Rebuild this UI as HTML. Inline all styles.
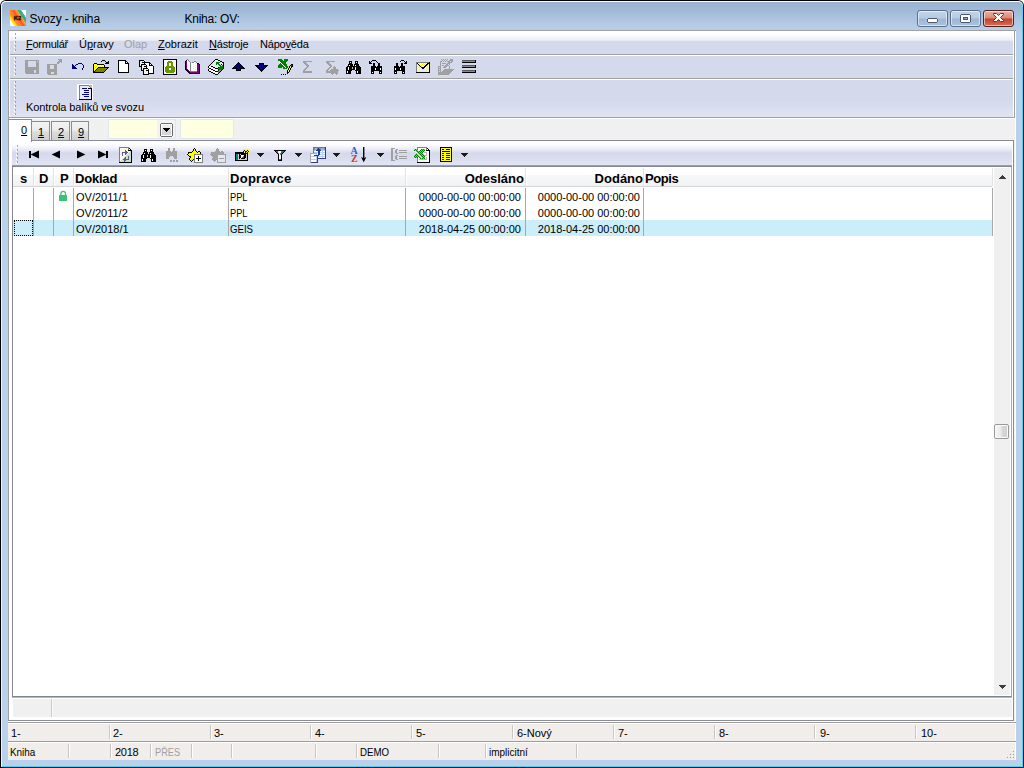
<!DOCTYPE html>
<html>
<head>
<meta charset="utf-8">
<title>Svozy - kniha</title>
<style>
html,body{margin:0;padding:0;width:1024px;height:768px;overflow:hidden;background:#fff;}
#win{left:0;top:0;width:1024px;height:768px;background:#000;border-radius:6px 6px 0 0;}
body{font-family:"Liberation Sans",sans-serif;font-size:11px;color:#000;position:relative;}
.a{position:absolute;}
.t{position:absolute;white-space:nowrap;line-height:13px;font-size:11px;}
u{text-decoration:underline;text-underline-offset:1px;text-decoration-thickness:1px;}
/* window frame */
#frame{left:1px;top:1px;width:1022px;height:766px;border-radius:5px 5px 0 0;background:#b9d1ea;overflow:hidden;}
#titlegrad{left:0;top:0;width:1022px;height:40px;background:linear-gradient(#98b4d2 0px,#a0bad7 10px,#b2c9e3 22px,#b9d1ea 32px);}
#hl{left:0;top:0;width:1022px;height:766px;border-radius:5px 5px 0 0;box-shadow:inset 0 1px 0 #ffffff, inset 1px 0 0 #eef4fa, inset -1px -1px 0 #47d5f5;}
#title{left:29.5px;top:12px;font-size:12px;line-height:14px;letter-spacing:-0.12px;}
#title2{left:184.5px;top:12px;font-size:12px;line-height:14px;letter-spacing:-0.25px;}
.cb{top:10px;height:15px;border:1px solid #5c6f8a;border-radius:3px;box-shadow:inset 0 0 0 1px rgba(255,255,255,.55);}
#bmin,#bmax{background:linear-gradient(#c3d5ea 0%,#b5cae3 48%,#9cb7d6 52%,#a9c3df 100%);}
#bcls{background:linear-gradient(#e9b0a5 0%,#d98877 48%,#c4402a 52%,#d4705c 100%);border-color:#5a1f1b;}
/* client */
#client{left:8px;top:30px;width:1008px;height:730px;background:#f0f0f0;}
#dock{left:1px;top:1px;width:1006px;height:87px;background:#d5d9ec;}
.bar{left:1px;width:1004px;background:linear-gradient(#ffffff 0px,#ffffff 3px,#f6f7fc 6px,#ebedf7 9.4px,#d5d9ec 10px);}
.sepg{left:2px;width:1004px;height:1px;background:#a0a0a0;}
.sepw{left:2px;width:1004px;height:1px;background:#ffffff;}
.grip{left:5px;width:2px;background-image:linear-gradient(to bottom,transparent 0px,transparent 1px,#fff 1px,#fff 3px,transparent 3px),linear-gradient(to bottom,#9fa2b2 0px,#9fa2b2 2px,transparent 2px);background-size:1px 4px,1px 4px;background-position:0 0,1px 0;background-repeat:repeat-y;}
.m{top:7px;}
/* tabs */
.tab{top:91px;height:19px;border:1px solid #898c95;border-bottom:none;background:linear-gradient(#f3f3f3 0%,#ececec 45%,#dcdcdc 55%,#cfcfcf 100%);box-sizing:border-box;}
.tabt{top:96px;}
#tab0{left:0px;top:89px;width:24px;height:23px;background:#fff;border:1px solid #898c95;border-bottom:none;border-left-color:#a0a0a0;box-sizing:border-box;}
#page{left:0;top:110px;width:1006px;height:581px;background:#fff;border:1px solid #898c95;border-left-color:#a0a0a0;box-sizing:border-box;}
.yel{top:89px;height:20px;background:#ffffe1;border:1px solid #e2e6ee;border-radius:2px;box-sizing:border-box;}
/* inner toolbar */
#itb{left:4px;top:112px;width:1000px;height:23px;background:linear-gradient(#ffffff 0px,#fcfcfe 3px,#eceef7 7px,#d5d9ec 11px,#d8dcee 16px,#e2e5f3 23px);}
#itbl{left:4px;top:135px;width:1000px;height:1px;background:#9a9eb4;}
/* grid */
#grid{left:4px;top:136px;width:1000px;height:532px;background:#fff;border:1px solid #828790;border-right-color:#a4a8b2;border-bottom:1px solid #7f8591;box-sizing:border-box;height:531px;box-shadow:0 1px 0 #b4b8c2;}
#ghead{left:0px;top:0px;width:979px;height:19px;background:linear-gradient(#ffffff 0%,#ffffff 40%,#f7f8fa 45%,#f1f2f4 100%);border-bottom:1px solid #d5d5d5;}
.hs{top:1px;width:1px;height:18px;background:#e0e3e8;box-shadow:1px 0 0 #fff;}
.h{position:absolute;top:4px;font-weight:bold;font-size:13px;line-height:15px;white-space:nowrap;}
.vl{top:21px;width:1px;height:48px;background:#a8a8a8;}
.sq{transform-origin:0 0;}
.r{position:absolute;font-size:11px;line-height:13px;white-space:nowrap;}
#sel{left:0px;top:53px;width:980px;height:16px;background:#cbeefa;}
#focus{left:1px;top:53px;width:19px;height:16px;box-sizing:border-box;border:1px dotted #000;}
#sb{left:981px;top:1px;width:16px;height:527px;background:#f0f0f0;}
#thumb{left:0px;top:256px;width:15px;height:15px;box-sizing:border-box;border:1px solid #999a9c;border-radius:2px;background:linear-gradient(90deg,#f5f5f5 0%,#ebebeb 47%,#dadadc 53%,#cdcdd1 100%);box-shadow:inset 0 0 0 1px #fbfbfb;}
#gstat{left:5px;top:669px;width:999px;height:18px;background:#f0f0f0;}
/* bottom bars */
.bb{left:0;width:1007px;background:#f0edeb;}
.fs{top:1px;width:1px;height:14px;background:#c8c5c2;box-shadow:1px 0 0 #fff;}
</style>
</head>
<body>
<div id="win" class="a"></div>
<div id="frame" class="a">
 <div id="titlegrad" class="a"></div>
 <div id="hl" class="a"></div>
</div>
<svg class="a" style="left:10px;top:10px" width="16" height="16" viewBox="0 0 16 16"><defs><linearGradient id="ag" gradientUnits="userSpaceOnUse" x1="0" y1="16" x2="18.5" y2="3.5">
<stop offset="0" stop-color="#fff"/><stop offset="0.15" stop-color="#fff"/><stop offset="0.18" stop-color="#fff228"/><stop offset="0.245" stop-color="#ffd41e"/><stop offset="0.31" stop-color="#ff8c1c"/><stop offset="0.447" stop-color="#ff7a24"/><stop offset="0.51" stop-color="#ff4a2c"/><stop offset="0.573" stop-color="#ff8428"/><stop offset="0.636" stop-color="#f8a238"/><stop offset="0.672" stop-color="#a8a060"/><stop offset="0.70" stop-color="#3ea474"/><stop offset="0.762" stop-color="#36b49a"/><stop offset="0.80" stop-color="#3ab8a0"/><stop offset="0.82" stop-color="#fff"/><stop offset="1" stop-color="#fff"/></linearGradient></defs>
<rect width="16" height="16" fill="url(#ag)"/>
<text x="3.8" y="10" font-family="Liberation Sans" font-weight="bold" font-size="5.8" letter-spacing="0" fill="#111" stroke="#111" stroke-width="0.35">K2</text></svg>
<div id="title" class="t">Svozy - kniha</div>
<div id="title2" class="t">Kniha: OV:</div>
<div id="bmin" class="a cb" style="left:917px;width:29px;"></div>
<div id="bmax" class="a cb" style="left:950px;width:29px;"></div>
<div id="bcls" class="a cb" style="left:983px;width:29px;"></div>
<svg class="a" style="left:927px;top:18px" width="11" height="5" shape-rendering="crispEdges"><path fill="#50576a" d="M1 0h9v1h-9zM0 1h1v1h-1zM10 1h1v1h-1zM0 2h1v1h-1zM10 2h1v1h-1zM0 3h1v1h-1zM10 3h1v1h-1zM1 4h9v1h-9z"/><path fill="#ffffff" d="M1 1h9v1h-9zM1 2h9v1h-9zM1 3h9v1h-9z"/></svg>
<svg class="a" style="left:960px;top:14px" width="11" height="9" shape-rendering="crispEdges"><path fill="#50576a" d="M1 0h9v1h-9zM0 1h1v1h-1zM10 1h1v1h-1zM0 2h1v1h-1zM10 2h1v1h-1zM0 3h1v1h-1zM3 3h5v1h-5zM10 3h1v1h-1zM0 4h1v1h-1zM3 4h1v1h-1zM10 4h1v1h-1zM0 5h1v1h-1zM3 5h5v1h-5zM10 5h1v1h-1zM0 6h1v1h-1zM10 6h1v1h-1zM0 7h1v1h-1zM10 7h1v1h-1zM1 8h9v1h-9z"/><path fill="#ffffff" d="M1 1h9v1h-9zM1 2h9v1h-9zM1 3h2v1h-2zM8 3h2v1h-2zM1 4h2v1h-2zM8 4h2v1h-2zM1 5h2v1h-2zM8 5h2v1h-2zM1 6h9v1h-9zM1 7h9v1h-9z"/><path fill="#8da4c4" d="M4 4h3v1h-3z"/><path fill="#50576a" d="M7 4h1v1h-1z"/></svg>
<svg class="a" style="left:993px;top:13px" width="11" height="9" viewBox="0 0 11 9"><path d="M0.5,0.5 h3 l2,2 l2,-2 h3 v1 l-3,3 l3,3 v1 h-3 l-2,-2 l-2,2 h-3 v-1 l3,-3 l-3,-3 z" fill="#fff" stroke="#4e3a40" stroke-width="1" stroke-linejoin="round"/></svg>

<div id="client" class="a">
 <!-- 3D client border -->
 <div class="a" style="left:0;top:0;width:1008px;height:1px;background:#a0a0a0;"></div>
 <div class="a" style="left:0;top:0;width:1px;height:692px;background:#a0a0a0;"></div>
 <div class="a" style="left:1007px;top:1px;width:1px;height:729px;background:#fff;"></div>

 <!-- toolbar dock : client y 1..87 (abs 31..117) -->
 <div id="dock" class="a">
  <div class="a bar" style="top:0;height:23px;"></div>
  <div class="a bar" style="top:24px;height:23px;background:#d5d9ec;"></div>
  <div class="a bar" style="top:48px;height:38px;background:linear-gradient(#d5d9ec 0,#d5d9ec 22px,#e1e4f2 38px);"></div>
  <div class="a" style="left:0;top:0;width:1px;height:87px;background:#fff;"></div>
  <div class="a" style="left:1px;top:23px;width:1004px;height:1px;background:#a0a0a0;"></div>
  <div class="a" style="left:1px;top:24px;width:1004px;height:1px;background:#fff;"></div>
  <div class="a" style="left:1px;top:47px;width:1004px;height:1px;background:#a0a0a0;"></div>
  <div class="a" style="left:1px;top:48px;width:1004px;height:1px;background:#fff;"></div>
  <div class="a" style="left:0;top:86px;width:1006px;height:1px;background:#a0a0a0;"></div>
  <div class="a" style="left:1004px;top:0;width:1px;height:86px;background:#fff;"></div>
  <div class="a" style="left:1005px;top:0;width:1px;height:87px;background:#a0a0a0;"></div>
  <div class="a grip" style="top:2px;height:20px;"></div>
  <div class="a grip" style="top:26px;height:20px;"></div>
  <div class="a grip" style="top:50px;height:34px;"></div>
  <svg class="a" style="left:15px;top:28px" width="16" height="16" shape-rendering="crispEdges"><path fill="#a0a0a0" d="M1 1h14v1h-14zM1 2h3v1h-3zM12 2h1v1h-1zM14 2h1v1h-1zM1 3h3v1h-3zM12 3h3v1h-3zM1 4h3v1h-3zM12 4h3v1h-3zM1 5h3v1h-3zM12 5h3v1h-3zM1 6h3v1h-3zM12 6h3v1h-3zM1 7h3v1h-3zM12 7h3v1h-3zM1 8h14v1h-14zM1 9h14v1h-14zM1 10h14v1h-14zM1 11h9v1h-9zM12 11h3v1h-3zM1 12h9v1h-9zM12 12h3v1h-3zM1 13h9v1h-9zM12 13h3v1h-3zM2 14h13v1h-13z"/></svg><svg class="a" style="left:38px;top:28px" width="16" height="16" shape-rendering="crispEdges"><path fill="#a0a0a0" d="M11 0h4v1h-4zM12 1h3v1h-3zM11 2h4v1h-4zM10 3h3v1h-3zM14 3h1v1h-1zM10 4h2v1h-2zM0 5h10v1h-10zM0 6h3v1h-3zM7 6h3v1h-3zM0 7h3v1h-3zM7 7h3v1h-3zM0 8h3v1h-3zM7 8h3v1h-3zM0 9h3v1h-3zM7 9h3v1h-3zM0 10h10v1h-10zM0 11h10v1h-10zM0 12h10v1h-10zM0 13h4v1h-4zM7 13h3v1h-3zM0 14h4v1h-4zM7 14h3v1h-3zM1 15h9v1h-9z"/></svg><svg class="a" style="left:61px;top:28px" width="16" height="16" shape-rendering="crispEdges"><path fill="#000080" d="M8 4h4v1h-4zM2 5h1v1h-1zM6 5h2v1h-2zM12 5h1v1h-1zM2 6h2v1h-2zM5 6h1v1h-1zM13 6h1v1h-1zM2 7h3v1h-3zM13 7h1v1h-1zM2 8h4v1h-4zM13 8h1v1h-1zM2 9h5v1h-5zM12 9h1v1h-1zM12 10h1v1h-1z"/></svg><svg class="a" style="left:84px;top:28px" width="16" height="16" shape-rendering="crispEdges"><path fill="#000000" d="M9 1h3v1h-3zM8 2h1v1h-1zM12 2h1v1h-1zM15 2h1v1h-1zM13 3h3v1h-3zM1 4h3v1h-3zM12 4h4v1h-4zM0 5h1v1h-1zM4 5h7v1h-7zM0 6h1v1h-1zM11 6h1v1h-1zM0 7h1v1h-1zM11 7h1v1h-1zM0 8h1v1h-1zM5 8h11v1h-11zM0 9h1v1h-1zM4 9h1v1h-1zM14 9h1v1h-1zM0 10h1v1h-1zM3 10h1v1h-1zM13 10h1v1h-1zM0 11h1v1h-1zM2 11h1v1h-1zM12 11h1v1h-1zM0 12h2v1h-2zM11 12h1v1h-1zM0 13h11v1h-11z"/><path fill="#ffff00" d="M1 5h1v1h-1zM3 5h1v1h-1zM2 6h1v1h-1zM4 6h1v1h-1zM6 6h1v1h-1zM8 6h1v1h-1zM10 6h1v1h-1zM1 7h1v1h-1zM3 7h1v1h-1zM5 7h1v1h-1zM7 7h1v1h-1zM9 7h1v1h-1zM2 8h1v1h-1zM4 8h1v1h-1zM1 9h1v1h-1zM3 9h1v1h-1zM2 10h1v1h-1zM1 11h1v1h-1z"/><path fill="#ffffff" d="M2 5h1v1h-1zM1 6h1v1h-1zM3 6h1v1h-1zM5 6h1v1h-1zM7 6h1v1h-1zM9 6h1v1h-1zM2 7h1v1h-1zM4 7h1v1h-1zM6 7h1v1h-1zM8 7h1v1h-1zM10 7h1v1h-1zM1 8h1v1h-1zM3 8h1v1h-1zM2 9h1v1h-1zM1 10h1v1h-1z"/><path fill="#808000" d="M5 9h9v1h-9zM4 10h9v1h-9zM3 11h9v1h-9zM2 12h9v1h-9z"/></svg><svg class="a" style="left:107px;top:28px" width="16" height="16" shape-rendering="crispEdges"><path fill="#000000" d="M2 1h8v1h-8zM2 2h1v1h-1zM9 2h2v1h-2zM2 3h1v1h-1zM9 3h1v1h-1zM11 3h1v1h-1zM2 4h1v1h-1zM9 4h4v1h-4zM2 5h1v1h-1zM12 5h1v1h-1zM2 6h1v1h-1zM12 6h1v1h-1zM2 7h1v1h-1zM12 7h1v1h-1zM2 8h1v1h-1zM12 8h1v1h-1zM2 9h1v1h-1zM12 9h1v1h-1zM2 10h1v1h-1zM12 10h1v1h-1zM2 11h1v1h-1zM12 11h1v1h-1zM2 12h1v1h-1zM12 12h1v1h-1zM2 13h11v1h-11z"/><path fill="#ffffff" d="M3 2h6v1h-6zM3 3h6v1h-6zM10 3h1v1h-1zM3 4h6v1h-6zM3 5h9v1h-9zM3 6h9v1h-9zM3 7h9v1h-9zM3 8h9v1h-9zM3 9h9v1h-9zM3 10h9v1h-9zM3 11h9v1h-9zM3 12h9v1h-9z"/></svg><svg class="a" style="left:130px;top:28px" width="16" height="16" shape-rendering="crispEdges"><path fill="#000000" d="M0 1h5v1h-5zM0 2h1v1h-1zM5 2h1v1h-1zM0 3h1v1h-1zM3 3h8v1h-8zM0 4h1v1h-1zM5 4h1v1h-1zM10 4h2v1h-2zM0 5h1v1h-1zM2 5h5v1h-5zM10 5h1v1h-1zM12 5h1v1h-1zM0 6h1v1h-1zM2 6h1v1h-1zM7 6h1v1h-1zM10 6h4v1h-4zM0 7h3v1h-3zM5 7h3v1h-3zM14 7h1v1h-1zM2 8h1v1h-1zM7 8h1v1h-1zM14 8h1v1h-1zM2 9h1v1h-1zM4 9h5v1h-5zM14 9h1v1h-1zM2 10h1v1h-1zM4 10h1v1h-1zM9 10h1v1h-1zM14 10h1v1h-1zM2 11h3v1h-3zM7 11h3v1h-3zM14 11h1v1h-1zM4 12h1v1h-1zM9 12h1v1h-1zM14 12h1v1h-1zM4 13h1v1h-1zM9 13h1v1h-1zM14 13h1v1h-1zM4 14h1v1h-1zM9 14h6v1h-6zM4 15h6v1h-6z"/><path fill="#ffff00" d="M1 2h1v1h-1zM3 2h1v1h-1zM2 3h1v1h-1zM1 4h1v1h-1zM3 4h1v1h-1zM1 6h1v1h-1zM3 6h1v1h-1zM5 6h1v1h-1zM4 7h1v1h-1zM3 8h1v1h-1zM5 8h1v1h-1zM3 10h1v1h-1zM5 10h1v1h-1zM7 10h1v1h-1zM6 11h1v1h-1zM5 12h1v1h-1zM7 12h1v1h-1zM6 13h1v1h-1zM8 13h1v1h-1zM5 14h1v1h-1zM7 14h1v1h-1z"/><path fill="#ffffff" d="M2 2h1v1h-1zM4 2h1v1h-1zM1 3h1v1h-1zM2 4h1v1h-1zM4 4h1v1h-1zM6 4h4v1h-4zM1 5h1v1h-1zM7 5h3v1h-3zM11 5h1v1h-1zM4 6h1v1h-1zM6 6h1v1h-1zM8 6h2v1h-2zM3 7h1v1h-1zM8 7h6v1h-6zM4 8h1v1h-1zM6 8h1v1h-1zM8 8h6v1h-6zM3 9h1v1h-1zM9 9h5v1h-5zM6 10h1v1h-1zM8 10h1v1h-1zM10 10h4v1h-4zM5 11h1v1h-1zM10 11h4v1h-4zM6 12h1v1h-1zM8 12h1v1h-1zM10 12h4v1h-4zM5 13h1v1h-1zM7 13h1v1h-1zM10 13h4v1h-4zM6 14h1v1h-1zM8 14h1v1h-1z"/></svg><svg class="a" style="left:153px;top:28px" width="16" height="16" shape-rendering="crispEdges"><path fill="#000000" d="M1 0h14v1h-14zM1 1h1v1h-1zM14 1h1v1h-1zM1 2h1v1h-1zM14 2h1v1h-1zM1 3h1v1h-1zM14 3h1v1h-1zM1 4h1v1h-1zM14 4h1v1h-1zM1 5h1v1h-1zM14 5h1v1h-1zM1 6h1v1h-1zM14 6h1v1h-1zM1 7h1v1h-1zM14 7h1v1h-1zM1 8h1v1h-1zM14 8h1v1h-1zM1 9h1v1h-1zM14 9h1v1h-1zM1 10h1v1h-1zM14 10h1v1h-1zM1 11h1v1h-1zM14 11h1v1h-1zM1 12h1v1h-1zM14 12h1v1h-1zM1 13h1v1h-1zM14 13h1v1h-1zM1 14h1v1h-1zM14 14h1v1h-1zM1 15h14v1h-14z"/><path fill="#ffffff" d="M2 1h12v1h-12zM2 2h4v1h-4zM10 2h4v1h-4zM2 3h3v1h-3zM11 3h3v1h-3zM2 4h3v1h-3zM7 4h2v1h-2zM11 4h3v1h-3zM2 5h3v1h-3zM7 5h2v1h-2zM11 5h3v1h-3zM2 6h3v1h-3zM7 6h2v1h-2zM11 6h3v1h-3zM2 7h2v1h-2zM12 7h2v1h-2zM2 8h1v1h-1zM13 8h1v1h-1zM2 9h1v1h-1zM7 9h2v1h-2zM13 9h1v1h-1zM2 10h1v1h-1zM7 10h2v1h-2zM13 10h1v1h-1zM2 11h1v1h-1zM13 11h1v1h-1zM2 12h1v1h-1zM13 12h1v1h-1zM2 13h2v1h-2zM12 13h2v1h-2zM2 14h12v1h-12z"/><path fill="#669900" d="M6 2h4v1h-4zM5 3h6v1h-6zM5 4h2v1h-2zM9 4h2v1h-2zM5 5h2v1h-2zM9 5h2v1h-2zM5 6h2v1h-2zM9 6h2v1h-2zM4 7h8v1h-8zM3 8h10v1h-10zM3 9h4v1h-4zM9 9h4v1h-4zM3 10h4v1h-4zM9 10h4v1h-4zM3 11h10v1h-10zM3 12h10v1h-10zM4 13h8v1h-8z"/></svg><svg class="a" style="left:176px;top:28px" width="16" height="16" shape-rendering="crispEdges"><path fill="#808080" d="M2 0h1v1h-1zM3 1h1v1h-1zM4 2h1v1h-1zM9 2h2v1h-2zM5 3h1v1h-1zM7 3h2v1h-2zM11 3h1v1h-1zM5 4h1v1h-1zM5 5h1v1h-1zM5 6h1v1h-1zM5 7h1v1h-1zM5 8h1v1h-1zM5 9h1v1h-1zM5 10h1v1h-1zM5 11h1v1h-1zM5 12h7v1h-7z"/><path fill="#000000" d="M1 1h1v1h-1zM0 2h1v1h-1zM0 3h1v1h-1zM0 4h1v1h-1zM12 4h2v1h-2zM0 5h1v1h-1zM14 5h1v1h-1zM0 6h1v1h-1zM14 6h1v1h-1zM0 7h1v1h-1zM14 7h1v1h-1zM0 8h1v1h-1zM14 8h1v1h-1zM0 9h1v1h-1zM14 9h1v1h-1zM0 10h2v1h-2zM14 10h1v1h-1zM1 11h2v1h-2zM14 11h1v1h-1zM2 12h2v1h-2zM14 12h1v1h-1zM3 13h2v1h-2zM14 13h1v1h-1zM4 14h11v1h-11z"/><path fill="#ffffff" d="M2 1h1v1h-1zM2 2h2v1h-2zM2 3h3v1h-3zM9 3h2v1h-2zM2 4h3v1h-3zM6 4h4v1h-4zM11 4h1v1h-1zM2 5h3v1h-3zM6 5h2v1h-2zM9 5h3v1h-3zM2 6h3v1h-3zM6 6h4v1h-4zM11 6h1v1h-1zM2 7h3v1h-3zM6 7h2v1h-2zM9 7h3v1h-3zM2 8h3v1h-3zM6 8h4v1h-4zM11 8h1v1h-1zM2 9h3v1h-3zM6 9h2v1h-2zM9 9h3v1h-3zM3 10h2v1h-2zM6 10h4v1h-4zM11 10h1v1h-1zM4 11h1v1h-1zM6 11h6v1h-6z"/><path fill="#800080" d="M1 2h1v1h-1zM1 3h1v1h-1zM1 4h1v1h-1zM1 5h1v1h-1zM12 5h2v1h-2zM1 6h1v1h-1zM12 6h2v1h-2zM1 7h1v1h-1zM12 7h2v1h-2zM1 8h1v1h-1zM12 8h2v1h-2zM1 9h1v1h-1zM12 9h2v1h-2zM2 10h1v1h-1zM12 10h2v1h-2zM3 11h1v1h-1zM12 11h2v1h-2zM4 12h1v1h-1zM12 12h2v1h-2zM5 13h9v1h-9z"/><path fill="#ffff00" d="M10 4h1v1h-1zM8 5h1v1h-1zM10 6h1v1h-1zM8 7h1v1h-1zM10 8h1v1h-1zM8 9h1v1h-1zM10 10h1v1h-1z"/></svg><svg class="a" style="left:199px;top:28px" width="16" height="16" shape-rendering="crispEdges"><path fill="#000000" d="M7 0h3v1h-3zM6 1h1v1h-1zM10 1h2v1h-2zM5 2h1v1h-1zM12 2h2v1h-2zM4 3h1v1h-1zM14 3h2v1h-2zM3 4h1v1h-1zM15 4h1v1h-1zM2 5h1v1h-1zM13 5h1v1h-1zM15 5h1v1h-1zM1 6h1v1h-1zM15 6h1v1h-1zM0 7h1v1h-1zM3 7h2v1h-2zM15 7h1v1h-1zM0 8h1v1h-1zM5 8h2v1h-2zM10 8h1v1h-1zM15 8h1v1h-1zM1 9h2v1h-2zM7 9h3v1h-3zM15 9h1v1h-1zM0 10h1v1h-1zM3 10h2v1h-2zM10 10h1v1h-1zM14 10h1v1h-1zM0 11h1v1h-1zM5 11h2v1h-2zM10 11h1v1h-1zM13 11h1v1h-1zM1 12h2v1h-2zM7 12h3v1h-3zM12 12h1v1h-1zM3 13h2v1h-2zM11 13h1v1h-1zM5 14h2v1h-2zM10 14h1v1h-1zM7 15h3v1h-3z"/><path fill="#e6e9f6" d="M7 1h3v1h-3zM6 2h6v1h-6zM5 3h3v1h-3zM12 3h2v1h-2zM4 4h4v1h-4zM11 4h4v1h-4zM3 5h5v1h-5zM9 5h1v1h-1zM12 5h1v1h-1zM14 5h1v1h-1zM2 6h9v1h-9zM13 6h1v1h-1zM5 7h7v1h-7zM7 8h3v1h-3z"/><path fill="#008000" d="M8 3h4v1h-4zM8 4h3v1h-3zM8 5h1v1h-1zM10 5h2v1h-2zM11 6h2v1h-2zM14 6h1v1h-1zM12 7h3v1h-3zM11 8h4v1h-4zM10 9h5v1h-5zM11 10h3v1h-3z"/><path fill="#ffffff" d="M1 7h2v1h-2zM1 8h4v1h-4zM3 9h4v1h-4zM1 10h2v1h-2zM5 10h5v1h-5zM1 11h4v1h-4zM7 11h3v1h-3zM3 12h4v1h-4zM5 13h5v1h-5zM7 14h3v1h-3z"/><path fill="#808080" d="M11 11h2v1h-2zM10 12h2v1h-2zM10 13h1v1h-1z"/></svg><svg class="a" style="left:222px;top:28px" width="16" height="16" shape-rendering="crispEdges"><path fill="#000000" d="M7 3h1v1h-1zM6 4h1v1h-1zM8 4h1v1h-1zM5 5h1v1h-1zM9 5h1v1h-1zM4 6h1v1h-1zM10 6h1v1h-1zM3 7h1v1h-1zM11 7h1v1h-1zM2 8h1v1h-1zM12 8h1v1h-1zM1 9h5v1h-5zM9 9h5v1h-5zM5 10h1v1h-1zM9 10h1v1h-1zM5 11h5v1h-5z"/><path fill="#000080" d="M7 4h1v1h-1zM6 5h3v1h-3zM5 6h5v1h-5zM4 7h7v1h-7zM3 8h9v1h-9zM6 9h3v1h-3zM6 10h3v1h-3z"/></svg><svg class="a" style="left:245px;top:28px" width="16" height="16" shape-rendering="crispEdges"><path fill="#000000" d="M5 4h5v1h-5zM5 5h1v1h-1zM9 5h1v1h-1zM1 6h5v1h-5zM9 6h5v1h-5zM2 7h1v1h-1zM12 7h1v1h-1zM3 8h1v1h-1zM11 8h1v1h-1zM4 9h1v1h-1zM10 9h1v1h-1zM5 10h1v1h-1zM9 10h1v1h-1zM6 11h1v1h-1zM8 11h1v1h-1zM7 12h1v1h-1z"/><path fill="#000080" d="M6 5h3v1h-3zM6 6h3v1h-3zM3 7h9v1h-9zM4 8h7v1h-7zM5 9h5v1h-5zM6 10h3v1h-3zM7 11h1v1h-1z"/></svg><svg class="a" style="left:268px;top:28px" width="16" height="16" shape-rendering="crispEdges"><path fill="#008000" d="M1 0h4v1h-4zM7 0h4v1h-4zM1 1h5v1h-5zM7 1h4v1h-4zM3 2h7v1h-7zM4 3h5v1h-5zM3 4h1v1h-1zM5 4h4v1h-4zM2 5h3v1h-3zM6 5h4v1h-4zM1 6h5v1h-5zM7 6h3v1h-3zM1 7h6v1h-6zM8 7h3v1h-3zM1 8h4v1h-4zM6 8h2v1h-2zM9 8h2v1h-2zM6 9h4v1h-4z"/><path fill="#ffffff" d="M2 2h1v1h-1zM3 3h1v1h-1zM4 4h1v1h-1zM5 5h1v1h-1zM6 6h1v1h-1zM7 7h1v1h-1zM8 8h1v1h-1z"/><path fill="#000000" d="M14 5h2v1h-2zM13 6h1v1h-1zM15 6h1v1h-1zM12 7h1v1h-1zM14 7h2v1h-2zM12 8h1v1h-1zM14 8h1v1h-1zM11 9h1v1h-1zM13 9h1v1h-1zM11 10h1v1h-1zM13 10h1v1h-1zM10 11h1v1h-1zM12 11h1v1h-1zM10 12h1v1h-1zM12 12h1v1h-1zM10 13h2v1h-2zM10 14h1v1h-1zM4 15h1v1h-1zM6 15h1v1h-1zM8 15h1v1h-1z"/><path fill="#e00000" d="M14 6h1v1h-1z"/><path fill="#ffff00" d="M13 7h1v1h-1zM13 8h1v1h-1zM12 9h1v1h-1zM12 10h1v1h-1zM11 11h1v1h-1zM11 12h1v1h-1z"/></svg><svg class="a" style="left:291px;top:28px" width="16" height="16" shape-rendering="crispEdges"><path fill="#a0a0a0" d="M3 2h9v1h-9zM3 3h3v1h-3zM4 4h3v1h-3zM5 5h3v1h-3zM6 6h3v1h-3zM7 7h2v1h-2zM6 8h2v1h-2zM5 9h2v1h-2zM4 10h2v1h-2zM3 11h2v1h-2zM3 12h9v1h-9zM3 13h9v1h-9z"/></svg><svg class="a" style="left:314px;top:28px" width="16" height="16" shape-rendering="crispEdges"><path fill="#a0a0a0" d="M3 2h9v1h-9zM3 3h3v1h-3zM4 4h3v1h-3zM5 5h3v1h-3zM6 6h3v1h-3zM7 7h2v1h-2zM11 7h1v1h-1zM6 8h2v1h-2zM10 8h3v1h-3zM5 9h2v1h-2zM10 9h3v1h-3zM4 10h2v1h-2zM8 10h7v1h-7zM3 11h2v1h-2zM7 11h9v1h-9zM3 12h12v1h-12zM3 13h12v1h-12zM8 14h3v1h-3zM12 14h3v1h-3zM9 15h1v1h-1zM13 15h1v1h-1z"/></svg><svg class="a" style="left:337px;top:28px" width="16" height="16" shape-rendering="crispEdges"><path fill="#000000" d="M3 2h3v1h-3zM9 2h3v1h-3zM3 3h1v1h-1zM5 3h1v1h-1zM9 3h1v1h-1zM11 3h1v1h-1zM3 4h3v1h-3zM9 4h3v1h-3zM2 5h5v1h-5zM8 5h5v1h-5zM2 6h1v1h-1zM4 6h3v1h-3zM8 6h1v1h-1zM10 6h3v1h-3zM1 7h13v1h-13zM0 8h2v1h-2zM3 8h3v1h-3zM7 8h2v1h-2zM10 8h5v1h-5zM0 9h2v1h-2zM3 9h3v1h-3zM7 9h2v1h-2zM10 9h5v1h-5zM0 10h2v1h-2zM3 10h6v1h-6zM10 10h5v1h-5zM0 11h6v1h-6zM9 11h6v1h-6zM0 12h1v1h-1zM2 12h3v1h-3zM10 12h1v1h-1zM12 12h3v1h-3zM0 13h1v1h-1zM2 13h3v1h-3zM10 13h1v1h-1zM12 13h3v1h-3zM0 14h5v1h-5zM10 14h5v1h-5z"/><path fill="#ffffff" d="M4 3h1v1h-1zM10 3h1v1h-1zM3 6h1v1h-1zM9 6h1v1h-1zM2 8h1v1h-1zM9 8h1v1h-1zM2 9h1v1h-1zM9 9h1v1h-1zM2 10h1v1h-1zM9 10h1v1h-1zM1 12h1v1h-1zM11 12h1v1h-1zM1 13h1v1h-1zM11 13h1v1h-1z"/><path fill="#c0c0c0" d="M6 8h1v1h-1zM6 9h1v1h-1z"/></svg><svg class="a" style="left:360px;top:28px" width="16" height="16" shape-rendering="crispEdges"><path fill="#000000" d="M3 1h4v1h-4zM0 2h1v1h-1zM2 2h1v1h-1zM7 2h1v1h-1zM0 3h2v1h-2zM8 3h1v1h-1zM0 4h3v1h-3zM4 4h2v1h-2zM9 4h2v1h-2zM4 5h2v1h-2zM9 5h2v1h-2zM4 6h2v1h-2zM9 6h2v1h-2zM2 7h5v1h-5zM8 7h5v1h-5zM2 8h11v1h-11zM2 9h4v1h-4zM7 9h4v1h-4zM12 9h1v1h-1zM2 10h4v1h-4zM7 10h4v1h-4zM12 10h1v1h-1zM2 11h11v1h-11zM2 12h3v1h-3zM10 12h3v1h-3zM2 13h1v1h-1zM4 13h1v1h-1zM10 13h1v1h-1zM12 13h1v1h-1zM2 14h3v1h-3zM10 14h3v1h-3z"/><path fill="#ffffff" d="M6 9h1v1h-1zM11 9h1v1h-1zM6 10h1v1h-1zM11 10h1v1h-1zM3 13h1v1h-1zM11 13h1v1h-1z"/></svg><svg class="a" style="left:383px;top:28px" width="16" height="16" shape-rendering="crispEdges"><path fill="#000000" d="M9 1h3v1h-3zM8 2h1v1h-1zM12 2h1v1h-1zM14 2h1v1h-1zM13 3h2v1h-2zM4 4h2v1h-2zM9 4h2v1h-2zM12 4h3v1h-3zM4 5h2v1h-2zM9 5h2v1h-2zM4 6h2v1h-2zM9 6h2v1h-2zM2 7h5v1h-5zM8 7h5v1h-5zM2 8h11v1h-11zM2 9h1v1h-1zM4 9h4v1h-4zM9 9h4v1h-4zM2 10h1v1h-1zM4 10h4v1h-4zM9 10h4v1h-4zM2 11h11v1h-11zM2 12h3v1h-3zM10 12h3v1h-3zM2 13h1v1h-1zM4 13h1v1h-1zM10 13h1v1h-1zM12 13h1v1h-1zM2 14h3v1h-3zM10 14h3v1h-3z"/><path fill="#ffffff" d="M3 9h1v1h-1zM8 9h1v1h-1zM3 10h1v1h-1zM8 10h1v1h-1zM3 13h1v1h-1zM11 13h1v1h-1z"/></svg><svg class="a" style="left:406px;top:28px" width="16" height="16" shape-rendering="crispEdges"><path fill="#808080" d="M1 3h13v1h-13zM1 4h1v1h-1zM1 5h1v1h-1zM1 6h1v1h-1zM1 7h1v1h-1zM1 8h1v1h-1zM1 9h1v1h-1zM1 10h1v1h-1zM1 11h1v1h-1zM1 12h1v1h-1z"/><path fill="#000000" d="M14 3h1v1h-1zM2 4h1v1h-1zM12 4h3v1h-3zM3 5h1v1h-1zM11 5h2v1h-2zM14 5h1v1h-1zM4 6h1v1h-1zM10 6h2v1h-2zM14 6h1v1h-1zM5 7h1v1h-1zM9 7h2v1h-2zM14 7h1v1h-1zM6 8h4v1h-4zM14 8h1v1h-1zM7 9h2v1h-2zM14 9h1v1h-1zM14 10h1v1h-1zM14 11h1v1h-1zM14 12h1v1h-1zM1 13h14v1h-14z"/><path fill="#ffffff" d="M3 4h1v1h-1zM5 4h1v1h-1zM7 4h1v1h-1zM9 4h1v1h-1zM11 4h1v1h-1zM4 5h1v1h-1zM6 5h1v1h-1zM8 5h1v1h-1zM10 5h1v1h-1zM2 6h1v1h-1zM5 6h1v1h-1zM7 6h1v1h-1zM9 6h1v1h-1zM13 6h1v1h-1zM3 7h1v1h-1zM7 7h1v1h-1zM11 7h1v1h-1zM13 7h1v1h-1zM2 8h1v1h-1zM5 8h1v1h-1zM10 8h1v1h-1zM13 8h1v1h-1z"/><path fill="#ffff00" d="M4 4h1v1h-1zM6 4h1v1h-1zM8 4h1v1h-1zM10 4h1v1h-1zM2 5h1v1h-1zM5 5h1v1h-1zM7 5h1v1h-1zM9 5h1v1h-1zM13 5h1v1h-1zM3 6h1v1h-1zM6 6h1v1h-1zM8 6h1v1h-1zM12 6h1v1h-1zM2 7h1v1h-1zM4 7h1v1h-1zM6 7h1v1h-1zM8 7h1v1h-1zM12 7h1v1h-1zM3 8h1v1h-1zM12 8h1v1h-1z"/><path fill="#e8e8f4" d="M4 8h1v1h-1zM11 8h1v1h-1zM2 9h1v1h-1zM4 9h2v1h-2zM9 9h2v1h-2zM12 9h1v1h-1zM3 10h1v1h-1zM5 10h7v1h-7zM13 10h1v1h-1zM2 11h1v1h-1zM4 11h9v1h-9zM2 12h12v1h-12z"/><path fill="#ffffa0" d="M3 9h1v1h-1zM6 9h1v1h-1zM11 9h1v1h-1zM13 9h1v1h-1zM2 10h1v1h-1zM4 10h1v1h-1zM12 10h1v1h-1zM3 11h1v1h-1zM13 11h1v1h-1z"/></svg><svg class="a" style="left:429px;top:28px" width="16" height="16" shape-rendering="crispEdges"><path fill="#a0a0a0" d="M3 0h1v1h-1zM5 0h1v1h-1zM7 0h1v1h-1zM9 0h1v1h-1zM12 0h3v1h-3zM4 1h1v1h-1zM6 1h1v1h-1zM8 1h1v1h-1zM11 1h4v1h-4zM2 2h2v1h-2zM5 2h1v1h-1zM7 2h1v1h-1zM9 2h3v1h-3zM13 2h2v1h-2zM2 3h1v1h-1zM10 3h4v1h-4zM2 4h1v1h-1zM4 4h4v1h-4zM9 4h3v1h-3zM2 5h1v1h-1zM8 5h2v1h-2zM11 5h1v1h-1zM2 6h1v1h-1zM4 6h2v1h-2zM7 6h4v1h-4zM0 7h3v1h-3zM6 7h3v1h-3zM11 7h1v1h-1zM0 8h1v1h-1zM2 8h1v1h-1zM5 8h3v1h-3zM11 8h1v1h-1zM0 9h3v1h-3zM11 9h1v1h-1zM0 10h1v1h-1zM2 10h1v1h-1zM6 10h10v1h-10zM0 11h3v1h-3zM5 11h10v1h-10zM0 12h1v1h-1zM2 12h1v1h-1zM4 12h10v1h-10zM0 13h13v1h-13zM0 14h12v1h-12zM0 15h11v1h-11z"/></svg><svg class="a" style="left:452px;top:28px" width="16" height="16" shape-rendering="crispEdges"><path fill="#5a5a5a" d="M1 1h13v1h-13zM1 6h13v1h-13zM1 11h13v1h-13z"/><path fill="#000000" d="M14 1h1v1h-1zM14 2h1v1h-1zM1 3h14v1h-14zM14 6h1v1h-1zM14 7h1v1h-1zM1 8h14v1h-14zM14 11h1v1h-1zM14 12h1v1h-1zM1 13h14v1h-14z"/><path fill="#8c8c8c" d="M1 2h13v1h-13zM1 7h13v1h-13zM1 12h13v1h-13z"/></svg><svg class="a" style="left:68px;top:53px" width="16" height="16" shape-rendering="crispEdges"><path fill="#ffffff" d="M0 0h16v1h-16zM0 1h2v1h-2zM15 1h1v1h-1zM0 2h2v1h-2zM15 2h1v1h-1zM0 3h2v1h-2zM15 3h1v1h-1zM0 4h2v1h-2zM15 4h1v1h-1zM0 5h2v1h-2zM15 5h1v1h-1zM0 6h2v1h-2zM15 6h1v1h-1zM0 7h2v1h-2zM15 7h1v1h-1zM0 8h2v1h-2zM15 8h1v1h-1zM0 9h2v1h-2zM15 9h1v1h-1zM0 10h2v1h-2zM15 10h1v1h-1zM0 11h2v1h-2zM15 11h1v1h-1zM0 12h2v1h-2zM15 12h1v1h-1zM0 13h2v1h-2zM15 13h1v1h-1zM0 14h2v1h-2zM15 14h1v1h-1zM0 15h2v1h-2zM15 15h1v1h-1z"/><path fill="#808080" d="M2 1h10v1h-10zM2 2h1v1h-1zM12 2h1v1h-1zM2 3h1v1h-1zM13 3h1v1h-1zM2 4h1v1h-1zM2 5h1v1h-1zM2 6h1v1h-1zM2 7h1v1h-1zM2 8h1v1h-1zM2 9h1v1h-1zM2 10h1v1h-1zM2 11h1v1h-1zM2 12h1v1h-1zM2 13h1v1h-1zM2 14h1v1h-1z"/><path fill="#c0c0c0" d="M12 1h3v1h-3zM13 2h2v1h-2zM14 3h1v1h-1z"/><path fill="#e8e8f4" d="M3 2h9v1h-9zM3 3h10v1h-10zM3 4h2v1h-2zM10 4h1v1h-1zM3 5h11v1h-11zM3 6h4v1h-4zM12 6h2v1h-2zM3 7h11v1h-11zM3 8h4v1h-4zM12 8h2v1h-2zM3 9h11v1h-11zM3 10h2v1h-2zM12 10h2v1h-2zM3 11h11v1h-11zM3 12h4v1h-4zM12 12h2v1h-2zM3 13h11v1h-11zM3 14h11v1h-11z"/><path fill="#000080" d="M5 4h5v1h-5zM7 6h5v1h-5zM7 8h5v1h-5zM5 10h7v1h-7zM7 12h5v1h-5z"/><path fill="#000000" d="M11 4h4v1h-4zM14 5h1v1h-1zM14 6h1v1h-1zM14 7h1v1h-1zM14 8h1v1h-1zM14 9h1v1h-1zM14 10h1v1h-1zM14 11h1v1h-1zM14 12h1v1h-1zM14 13h1v1h-1zM14 14h1v1h-1zM2 15h13v1h-13z"/></svg>
  <!-- menu -->
  <div class="t m" style="left:17px;letter-spacing:-0.25px;"><u>F</u>ormulář</div>
  <div class="t m" style="left:70px;">Ú<u>p</u>ravy</div>
  <div class="t m" style="left:115px;color:#a0a0a0;">Olap</div>
  <div class="t m" style="left:149px;"><u>Z</u>obrazit</div>
  <div class="t m" style="left:200px;letter-spacing:-0.2px;"><u>N</u>ástroje</div>
  <div class="t m" style="left:251px;letter-spacing:-0.2px;">Nápo<u>v</u>ěda</div>
  <div class="t" style="left:17px;top:70px;letter-spacing:-0.08px;">Kontrola balíků ve svozu</div>
 </div>
 <div class="a" style="left:1px;top:88px;width:1006px;height:1px;background:#fff;"></div>

 <!-- tab page -->
 <div id="page" class="a"></div>
 <div id="tab0" class="a"></div>
 <div class="a tab" style="left:23px;width:19px;"></div>
 <div class="a tab" style="left:43px;width:19px;"></div>
 <div class="a tab" style="left:63px;width:18px;"></div>
 <div class="t" style="left:13px;top:94px;"><u>0</u></div>
 <div class="t tabt" style="left:30px;"><u>1</u></div>
 <div class="t tabt" style="left:50px;"><u>2</u></div>
 <div class="t tabt" style="left:70px;"><u>9</u></div>
 <div class="a yel" style="left:100px;width:68px;background:linear-gradient(90deg,#ffffe1 0,#ffffe1 48px,#f3f3f6 48px);"></div>
 <div class="a yel" style="left:172px;width:54px;"></div>
 <svg class="a" style="left:152px;top:93px" width="13" height="14" shape-rendering="crispEdges"><path fill="#6e6e6e" d="M1 0h11v1h-11zM0 1h1v1h-1zM12 1h1v1h-1zM0 2h1v1h-1zM12 2h1v1h-1zM0 3h1v1h-1zM12 3h1v1h-1zM0 4h1v1h-1zM12 4h1v1h-1zM0 5h1v1h-1zM12 5h1v1h-1zM0 6h1v1h-1zM12 6h1v1h-1zM0 7h1v1h-1zM12 7h1v1h-1zM0 8h1v1h-1zM12 8h1v1h-1zM0 9h1v1h-1zM12 9h1v1h-1zM0 10h1v1h-1zM12 10h1v1h-1zM0 11h1v1h-1zM12 11h1v1h-1zM0 12h1v1h-1zM12 12h1v1h-1zM1 13h11v1h-11z"/><path fill="#ffffff" d="M1 1h11v1h-11zM1 2h1v1h-1zM11 2h1v1h-1zM1 3h1v1h-1zM11 3h1v1h-1zM1 4h1v1h-1zM11 4h1v1h-1zM1 5h1v1h-1zM11 5h1v1h-1zM1 6h1v1h-1zM11 6h1v1h-1zM1 7h1v1h-1zM11 7h1v1h-1zM1 8h1v1h-1zM11 8h1v1h-1zM1 9h1v1h-1zM11 9h1v1h-1zM1 10h1v1h-1zM11 10h1v1h-1zM1 11h1v1h-1zM11 11h1v1h-1zM1 12h11v1h-11z"/><path fill="#ececec" d="M2 2h9v1h-9zM2 3h9v1h-9zM2 4h9v1h-9zM2 5h1v1h-1zM10 5h1v1h-1z"/><path fill="#000000" d="M3 5h7v1h-7zM4 6h5v1h-5zM5 7h3v1h-3zM6 8h1v1h-1z"/><path fill="#d6d6d6" d="M2 6h2v1h-2zM9 6h2v1h-2zM2 7h3v1h-3zM8 7h3v1h-3zM2 8h4v1h-4zM7 8h4v1h-4zM2 9h9v1h-9zM2 10h9v1h-9zM2 11h9v1h-9z"/></svg>

 <!-- inner toolbar -->
 <div id="itb" class="a"></div>
 <div id="itbl" class="a"></div>
 <div class="a grip" style="left:8px;top:115px;height:20px;"></div>

 <svg class="a" style="left:18px;top:117px" width="16" height="16" viewBox="0 0 16 16"><rect x="3" y="4" width="2" height="7" fill="#000"/><polygon points="4.6,7.5 13,3.6 13,11.4" fill="#000"/></svg><svg class="a" style="left:41px;top:117px" width="16" height="16" viewBox="0 0 16 16"><polygon points="2.6,7.5 11,3.6 11,11.4" fill="#000"/></svg><svg class="a" style="left:64px;top:117px" width="16" height="16" viewBox="0 0 16 16"><polygon points="13.4,7.5 5,3.6 5,11.4" fill="#000"/></svg><svg class="a" style="left:87px;top:117px" width="16" height="16" viewBox="0 0 16 16"><rect x="11" y="4" width="2" height="7" fill="#000"/><polygon points="11.4,7.5 3,3.6 3,11.4" fill="#000"/></svg><svg class="a" style="left:110px;top:117px" width="16" height="16" shape-rendering="crispEdges"><path fill="#808080" d="M1 0h10v1h-10zM1 1h1v1h-1zM10 1h1v1h-1zM1 2h1v1h-1zM10 2h1v1h-1zM1 3h1v1h-1zM1 4h1v1h-1zM1 5h1v1h-1zM1 6h1v1h-1zM1 7h1v1h-1zM1 8h1v1h-1zM1 9h1v1h-1zM1 10h1v1h-1zM1 11h1v1h-1zM1 12h1v1h-1zM1 13h1v1h-1zM1 14h1v1h-1z"/><path fill="#fbf7ec" d="M2 1h8v1h-8zM2 2h8v1h-8zM2 3h5v1h-5zM8 3h2v1h-2zM2 4h5v1h-5zM9 4h3v1h-3zM2 5h2v1h-2zM10 5h1v1h-1zM2 6h2v1h-2zM5 6h2v1h-2zM9 6h1v1h-1zM2 7h2v1h-2zM5 7h2v1h-2zM8 7h1v1h-1zM2 8h2v1h-2zM5 8h3v1h-3zM2 9h5v1h-5zM2 10h4v1h-4zM2 11h3v1h-3zM2 12h2v1h-2zM2 13h1v1h-1z"/><path fill="#000000" d="M11 1h1v1h-1zM12 2h1v1h-1zM10 3h4v1h-4zM13 4h1v1h-1zM13 5h1v1h-1zM13 6h1v1h-1zM13 7h1v1h-1zM13 8h1v1h-1zM13 9h1v1h-1zM13 10h1v1h-1zM13 11h1v1h-1zM13 12h1v1h-1zM13 13h1v1h-1zM13 14h1v1h-1zM1 15h13v1h-13z"/><path fill="#ffffff" d="M11 2h1v1h-1z"/><path fill="#5c5c96" d="M7 3h1v1h-1zM7 4h2v1h-2zM4 5h6v1h-6zM4 6h1v1h-1zM7 6h2v1h-2zM4 7h1v1h-1zM7 7h1v1h-1zM4 8h1v1h-1zM10 9h1v1h-1zM7 10h1v1h-1zM10 10h1v1h-1zM6 11h2v1h-2zM10 11h1v1h-1zM5 12h6v1h-6zM6 13h2v1h-2zM6 14h1v1h-1z"/><path fill="#c4e4c4" d="M12 4h1v1h-1zM11 5h2v1h-2zM10 6h3v1h-3zM9 7h4v1h-4zM8 8h5v1h-5zM7 9h3v1h-3zM11 9h2v1h-2zM6 10h1v1h-1zM8 10h2v1h-2zM11 10h2v1h-2zM5 11h1v1h-1zM8 11h2v1h-2zM11 11h2v1h-2zM4 12h1v1h-1zM11 12h2v1h-2zM3 13h3v1h-3zM8 13h5v1h-5zM2 14h4v1h-4zM7 14h6v1h-6z"/></svg><svg class="a" style="left:133px;top:117px" width="16" height="16" shape-rendering="crispEdges"><path fill="#000000" d="M3 2h3v1h-3zM9 2h3v1h-3zM3 3h1v1h-1zM5 3h1v1h-1zM9 3h1v1h-1zM11 3h1v1h-1zM3 4h3v1h-3zM9 4h3v1h-3zM2 5h5v1h-5zM8 5h5v1h-5zM2 6h1v1h-1zM4 6h3v1h-3zM8 6h1v1h-1zM10 6h3v1h-3zM1 7h13v1h-13zM0 8h2v1h-2zM3 8h3v1h-3zM7 8h2v1h-2zM10 8h5v1h-5zM0 9h2v1h-2zM3 9h3v1h-3zM7 9h2v1h-2zM10 9h5v1h-5zM0 10h2v1h-2zM3 10h6v1h-6zM10 10h5v1h-5zM0 11h6v1h-6zM9 11h6v1h-6zM0 12h1v1h-1zM2 12h3v1h-3zM10 12h1v1h-1zM12 12h3v1h-3zM0 13h1v1h-1zM2 13h3v1h-3zM10 13h1v1h-1zM12 13h3v1h-3zM0 14h5v1h-5zM10 14h5v1h-5z"/><path fill="#ffffff" d="M4 3h1v1h-1zM10 3h1v1h-1zM3 6h1v1h-1zM9 6h1v1h-1zM2 8h1v1h-1zM9 8h1v1h-1zM2 9h1v1h-1zM9 9h1v1h-1zM2 10h1v1h-1zM9 10h1v1h-1zM1 12h1v1h-1zM11 12h1v1h-1zM1 13h1v1h-1zM11 13h1v1h-1z"/><path fill="#c0c0c0" d="M6 8h1v1h-1zM6 9h1v1h-1z"/></svg><svg class="a" style="left:156px;top:117px" width="16" height="16" shape-rendering="crispEdges"><path fill="#a0a0a0" d="M4 1h2v1h-2zM9 1h2v1h-2zM4 2h2v1h-2zM9 2h2v1h-2zM4 3h2v1h-2zM9 3h2v1h-2zM2 4h5v1h-5zM8 4h5v1h-5zM2 5h11v1h-11zM2 6h11v1h-11zM2 7h11v1h-11zM2 8h11v1h-11zM2 9h4v1h-4zM9 9h4v1h-4zM2 10h3v1h-3zM10 10h3v1h-3zM2 11h3v1h-3zM10 11h3v1h-3zM6 13h2v1h-2zM9 13h2v1h-2zM12 13h2v1h-2zM6 14h2v1h-2zM9 14h2v1h-2zM12 14h2v1h-2z"/></svg><svg class="a" style="left:179px;top:117px" width="16" height="16" shape-rendering="crispEdges"><path fill="#000000" d="M7 1h1v1h-1zM6 2h1v1h-1zM8 2h1v1h-1zM6 3h1v1h-1zM8 3h1v1h-1zM5 4h1v1h-1zM9 4h1v1h-1zM11 4h2v1h-2zM1 5h4v1h-4zM10 5h1v1h-1zM13 5h1v1h-1zM1 6h1v1h-1zM13 6h1v1h-1zM0 7h1v1h-1zM1 8h1v1h-1zM2 9h2v1h-2zM11 9h1v1h-1zM3 10h1v1h-1zM11 10h1v1h-1zM2 11h1v1h-1zM9 11h5v1h-5zM2 12h1v1h-1zM6 12h1v1h-1zM11 12h1v1h-1zM3 13h1v1h-1zM5 13h1v1h-1zM11 13h1v1h-1zM4 14h1v1h-1z"/><path fill="#ffff00" d="M7 2h1v1h-1zM7 3h1v1h-1zM6 4h3v1h-3zM5 5h5v1h-5zM11 5h2v1h-2zM2 6h11v1h-11zM1 7h6v1h-6zM2 8h5v1h-5zM4 9h3v1h-3zM4 10h3v1h-3zM3 11h4v1h-4zM3 12h3v1h-3zM4 13h1v1h-1z"/><path fill="#808080" d="M7 7h9v1h-9zM7 8h1v1h-1zM15 8h1v1h-1zM7 9h1v1h-1zM15 9h1v1h-1zM7 10h1v1h-1zM15 10h1v1h-1zM7 11h1v1h-1zM15 11h1v1h-1zM7 12h1v1h-1zM15 12h1v1h-1zM7 13h1v1h-1zM15 13h1v1h-1zM7 14h1v1h-1zM15 14h1v1h-1zM7 15h9v1h-9z"/><path fill="#ffffff" d="M8 8h7v1h-7zM8 9h3v1h-3zM12 9h3v1h-3zM8 10h3v1h-3zM12 10h3v1h-3zM8 11h1v1h-1zM14 11h1v1h-1zM8 12h3v1h-3zM12 12h3v1h-3zM8 13h3v1h-3zM12 13h3v1h-3zM8 14h7v1h-7z"/></svg><svg class="a" style="left:202px;top:117px" width="16" height="16" shape-rendering="crispEdges"><path fill="#a0a0a0" d="M7 1h1v1h-1zM6 2h3v1h-3zM6 3h3v1h-3zM5 4h5v1h-5zM11 4h2v1h-2zM1 5h13v1h-13zM1 6h13v1h-13zM0 7h16v1h-16zM1 8h7v1h-7zM15 8h1v1h-1zM2 9h6v1h-6zM15 9h1v1h-1zM3 10h5v1h-5zM15 10h1v1h-1zM2 11h6v1h-6zM9 11h5v1h-5zM15 11h1v1h-1zM2 12h6v1h-6zM15 12h1v1h-1zM3 13h3v1h-3zM7 13h1v1h-1zM15 13h1v1h-1zM4 14h1v1h-1zM7 14h1v1h-1zM15 14h1v1h-1zM7 15h9v1h-9z"/><path fill="#e4e6f2" d="M8 8h7v1h-7zM8 9h7v1h-7zM8 10h7v1h-7zM8 11h1v1h-1zM14 11h1v1h-1zM8 12h7v1h-7zM8 13h7v1h-7zM8 14h7v1h-7z"/></svg><svg class="a" style="left:225px;top:117px" width="16" height="16" shape-rendering="crispEdges"><path fill="#ffff00" d="M10 2h6v1h-6zM10 3h1v1h-1zM12 3h2v1h-2zM15 3h1v1h-1zM11 4h1v1h-1zM14 4h1v1h-1zM11 5h1v1h-1zM13 5h1v1h-1zM15 5h1v1h-1z"/><path fill="#000000" d="M11 3h1v1h-1zM14 3h1v1h-1zM10 4h1v1h-1zM12 4h2v1h-2zM15 4h1v1h-1zM2 5h9v1h-9zM12 5h1v1h-1zM14 5h1v1h-1zM2 6h13v1h-13zM2 7h1v1h-1zM6 7h1v1h-1zM8 7h5v1h-5zM14 7h1v1h-1zM2 8h1v1h-1zM6 8h2v1h-2zM11 8h2v1h-2zM14 8h1v1h-1zM2 9h1v1h-1zM6 9h2v1h-2zM11 9h2v1h-2zM14 9h1v1h-1zM2 10h1v1h-1zM6 10h2v1h-2zM11 10h2v1h-2zM14 10h1v1h-1zM2 11h1v1h-1zM6 11h1v1h-1zM8 11h4v1h-4zM14 11h1v1h-1zM2 12h1v1h-1zM14 12h1v1h-1zM2 13h13v1h-13z"/><path fill="#008080" d="M3 7h2v1h-2zM3 8h2v1h-2zM3 9h2v1h-2zM3 10h2v1h-2zM3 11h2v1h-2zM3 12h2v1h-2z"/><path fill="#d4d0c8" d="M5 7h1v1h-1zM7 7h1v1h-1zM13 7h1v1h-1zM5 8h1v1h-1zM13 8h1v1h-1zM5 9h1v1h-1zM13 9h1v1h-1zM5 10h1v1h-1zM13 10h1v1h-1zM5 11h1v1h-1zM7 11h1v1h-1zM12 11h2v1h-2zM5 12h9v1h-9z"/><path fill="#ffffff" d="M8 8h3v1h-3zM8 9h2v1h-2zM8 10h1v1h-1z"/><path fill="#0080ff" d="M10 9h1v1h-1zM9 10h2v1h-2z"/></svg><svg class="a" style="left:264px;top:117px" width="16" height="16" shape-rendering="crispEdges"><path fill="#000000" d="M2 3h12v1h-12zM3 4h1v1h-1zM12 4h1v1h-1zM4 5h1v1h-1zM11 5h1v1h-1zM5 6h1v1h-1zM10 6h1v1h-1zM6 7h1v1h-1zM9 7h1v1h-1zM6 8h1v1h-1zM9 8h1v1h-1zM6 9h1v1h-1zM9 9h1v1h-1zM6 10h1v1h-1zM9 10h1v1h-1zM6 11h1v1h-1zM9 11h1v1h-1zM6 12h1v1h-1zM9 12h1v1h-1zM6 13h4v1h-4z"/><path fill="#008080" d="M4 4h2v1h-2zM10 4h2v1h-2zM5 5h1v1h-1zM9 5h2v1h-2zM6 6h1v1h-1zM9 6h1v1h-1zM7 12h2v1h-2z"/><path fill="#ffffff" d="M6 4h3v1h-3zM6 5h3v1h-3zM7 6h1v1h-1zM7 7h1v1h-1zM7 8h2v1h-2zM7 9h2v1h-2zM7 10h2v1h-2zM7 11h2v1h-2z"/><path fill="#808080" d="M9 4h1v1h-1zM8 6h1v1h-1zM8 7h1v1h-1z"/></svg><svg class="a" style="left:302px;top:117px" width="16" height="16" shape-rendering="crispEdges"><path fill="#6870c0" d="M3 0h12v1h-12zM3 1h1v1h-1zM3 2h1v1h-1zM3 3h1v1h-1zM3 4h1v1h-1zM3 5h1v1h-1z"/><path fill="#3c3888" d="M15 0h1v1h-1zM15 1h1v1h-1zM15 2h1v1h-1zM15 3h1v1h-1zM15 4h1v1h-1zM15 5h1v1h-1zM15 6h1v1h-1zM15 7h1v1h-1zM15 8h1v1h-1zM7 9h1v1h-1zM15 9h1v1h-1zM7 10h1v1h-1zM15 10h1v1h-1zM7 11h9v1h-9zM7 12h1v1h-1zM7 13h1v1h-1zM7 14h1v1h-1zM1 15h7v1h-7z"/><path fill="#7890c4" d="M4 1h1v1h-1zM7 1h1v1h-1zM9 1h2v1h-2zM14 1h1v1h-1zM4 2h1v1h-1zM10 2h1v1h-1zM14 2h1v1h-1z"/><path fill="#b8b098" d="M5 1h2v1h-2zM11 1h3v1h-3zM5 2h2v1h-2zM11 2h3v1h-3z"/><path fill="#1c3c90" d="M8 1h1v1h-1zM7 2h3v1h-3zM6 3h5v1h-5zM8 4h2v1h-2zM8 5h2v1h-2zM8 6h2v1h-2zM8 7h2v1h-2zM4 8h5v1h-5z"/><path fill="#b4d0f4" d="M4 3h2v1h-2zM11 3h4v1h-4zM12 4h1v1h-1zM4 5h4v1h-4zM10 5h5v1h-5zM12 6h1v1h-1zM6 7h1v1h-1zM10 7h5v1h-5zM12 8h1v1h-1zM1 9h6v1h-6zM8 9h7v1h-7zM6 10h1v1h-1zM12 10h1v1h-1zM6 11h1v1h-1zM1 12h6v1h-6zM6 13h1v1h-1zM6 14h1v1h-1z"/><path fill="#ffffff" d="M4 4h4v1h-4zM10 4h2v1h-2zM13 4h2v1h-2zM7 6h1v1h-1zM10 6h2v1h-2zM13 6h2v1h-2zM1 7h5v1h-5zM7 7h1v1h-1zM1 8h3v1h-3zM9 8h3v1h-3zM13 8h2v1h-2zM1 10h5v1h-5zM8 10h4v1h-4zM13 10h2v1h-2zM1 11h5v1h-5zM1 13h5v1h-5zM1 14h5v1h-5z"/><path fill="#a4a8ac" d="M0 6h7v1h-7zM0 7h1v1h-1zM0 8h1v1h-1zM0 9h1v1h-1zM0 10h1v1h-1zM0 11h1v1h-1zM0 12h1v1h-1zM0 13h1v1h-1zM0 14h1v1h-1zM0 15h1v1h-1z"/></svg><svg class="a" style="left:341px;top:117px" width="18" height="16" viewBox="0 0 18 16"><text x="1.6" y="6.8" font-family="Liberation Serif" font-weight="bold" font-size="10" fill="#2f5fc4">A</text>
<text x="2" y="14.9" font-family="Liberation Serif" font-weight="bold" font-size="10" fill="#c23a30">Z</text>
<rect x="14" y="0" width="1.4" height="13" fill="#000"/><polygon points="12,10 14.7,11.2 17.4,10 14.7,15.2" fill="#000"/></svg><svg class="a" style="left:382px;top:117px" width="17" height="16" shape-rendering="crispEdges"><path fill="#a0a0a0" d="M1 1h4v1h-4zM1 2h2v1h-2zM6 2h2v1h-2zM1 3h2v1h-2zM5 3h2v1h-2zM9 3h8v1h-8zM1 4h2v1h-2zM5 4h2v1h-2zM1 5h2v1h-2zM5 5h2v1h-2zM9 5h8v1h-8zM1 6h2v1h-2zM6 6h2v1h-2zM1 7h2v1h-2zM1 8h2v1h-2zM6 8h2v1h-2zM1 9h2v1h-2zM5 9h2v1h-2zM9 9h8v1h-8zM1 10h2v1h-2zM5 10h2v1h-2zM1 11h2v1h-2zM5 11h2v1h-2zM9 11h8v1h-8zM1 12h2v1h-2zM6 12h2v1h-2zM1 13h4v1h-4z"/></svg><svg class="a" style="left:405px;top:117px" width="17" height="16" shape-rendering="crispEdges"><path fill="#808080" d="M4 0h10v1h-10zM4 1h1v1h-1zM13 1h1v1h-1zM4 2h1v1h-1zM13 2h1v1h-1zM4 11h1v1h-1zM4 12h1v1h-1zM4 13h1v1h-1zM4 14h1v1h-1z"/><path fill="#ffffff" d="M5 1h8v1h-8zM5 2h3v1h-3zM12 2h1v1h-1zM14 2h1v1h-1zM5 3h2v1h-2zM12 3h1v1h-1zM2 4h1v1h-1zM11 4h5v1h-5zM3 5h1v1h-1zM10 5h1v1h-1zM14 5h2v1h-2zM4 6h1v1h-1zM10 6h3v1h-3zM14 6h2v1h-2zM5 7h1v1h-1zM11 7h2v1h-2zM14 7h2v1h-2zM6 8h1v1h-1zM14 8h2v1h-2zM7 9h1v1h-1zM12 9h4v1h-4zM5 10h1v1h-1zM8 10h1v1h-1zM12 10h1v1h-1zM14 10h2v1h-2zM5 11h2v1h-2zM12 11h1v1h-1zM14 11h2v1h-2zM5 12h1v1h-1zM14 12h2v1h-2zM5 13h11v1h-11zM5 14h11v1h-11z"/><path fill="#000000" d="M14 1h1v1h-1zM15 2h1v1h-1zM13 3h4v1h-4zM16 4h1v1h-1zM16 5h1v1h-1zM16 6h1v1h-1zM16 7h1v1h-1zM16 8h1v1h-1zM16 9h1v1h-1zM16 10h1v1h-1zM16 11h1v1h-1zM16 12h1v1h-1zM16 13h1v1h-1zM16 14h1v1h-1zM4 15h13v1h-13z"/><path fill="#9fb09f" d="M1 2h1v1h-1zM3 2h1v1h-1zM9 2h1v1h-1zM11 2h1v1h-1zM2 3h1v1h-1zM4 3h1v1h-1zM8 3h1v1h-1zM10 3h1v1h-1zM3 4h1v1h-1zM5 4h1v1h-1zM7 4h1v1h-1zM9 4h1v1h-1zM4 5h1v1h-1zM6 5h1v1h-1zM8 5h1v1h-1zM3 6h1v1h-1zM5 6h1v1h-1zM7 6h1v1h-1zM9 6h1v1h-1zM2 7h1v1h-1zM4 7h1v1h-1zM6 7h1v1h-1zM8 7h1v1h-1zM10 7h1v1h-1zM1 8h1v1h-1zM3 8h1v1h-1zM5 8h1v1h-1zM7 8h1v1h-1zM9 8h1v1h-1zM11 8h1v1h-1zM2 9h1v1h-1zM4 9h1v1h-1zM6 9h1v1h-1zM8 9h1v1h-1zM10 9h1v1h-1zM1 10h1v1h-1zM3 10h1v1h-1zM7 10h1v1h-1zM9 10h1v1h-1zM11 10h1v1h-1zM8 11h1v1h-1zM10 11h1v1h-1z"/><path fill="#008000" d="M2 2h1v1h-1zM8 2h1v1h-1zM10 2h1v1h-1zM1 3h1v1h-1zM3 3h1v1h-1zM7 3h1v1h-1zM9 3h1v1h-1zM11 3h1v1h-1zM4 4h1v1h-1zM6 4h1v1h-1zM8 4h1v1h-1zM10 4h1v1h-1zM5 5h1v1h-1zM7 5h1v1h-1zM9 5h1v1h-1zM6 6h1v1h-1zM8 6h1v1h-1zM3 7h1v1h-1zM7 7h1v1h-1zM9 7h1v1h-1zM2 8h1v1h-1zM4 8h1v1h-1zM8 8h1v1h-1zM10 8h1v1h-1zM1 9h1v1h-1zM3 9h1v1h-1zM5 9h1v1h-1zM9 9h1v1h-1zM11 9h1v1h-1zM2 10h1v1h-1zM4 10h1v1h-1zM6 10h1v1h-1zM10 10h1v1h-1zM7 11h1v1h-1zM9 11h1v1h-1zM11 11h1v1h-1z"/><path fill="#b8b8b8" d="M11 5h3v1h-3zM13 6h1v1h-1zM13 7h1v1h-1zM12 8h2v1h-2zM13 10h1v1h-1zM13 11h1v1h-1zM6 12h8v1h-8z"/></svg><svg class="a" style="left:432px;top:117px" width="12" height="15" shape-rendering="crispEdges"><path fill="#000000" d="M0 0h12v1h-12zM0 1h1v1h-1zM11 1h1v1h-1zM0 2h1v1h-1zM2 2h2v1h-2zM6 2h4v1h-4zM11 2h1v1h-1zM0 3h1v1h-1zM11 3h1v1h-1zM0 4h1v1h-1zM2 4h8v1h-8zM11 4h1v1h-1zM0 5h1v1h-1zM11 5h1v1h-1zM0 6h1v1h-1zM11 6h1v1h-1zM0 7h1v1h-1zM11 7h1v1h-1zM0 8h1v1h-1zM11 8h1v1h-1zM0 9h1v1h-1zM11 9h1v1h-1zM0 10h1v1h-1zM11 10h1v1h-1zM0 11h1v1h-1zM11 11h1v1h-1zM0 12h1v1h-1zM11 12h1v1h-1zM0 13h1v1h-1zM11 13h1v1h-1zM0 14h12v1h-12z"/><path fill="#ffff00" d="M1 1h10v1h-10zM1 2h1v1h-1zM4 2h2v1h-2zM10 2h1v1h-1zM1 3h10v1h-10zM1 4h1v1h-1zM10 4h1v1h-1zM1 5h10v1h-10zM1 6h1v1h-1zM4 6h2v1h-2zM10 6h1v1h-1zM1 7h10v1h-10zM1 8h1v1h-1zM4 8h2v1h-2zM10 8h1v1h-1zM1 9h10v1h-10zM1 10h1v1h-1zM4 10h2v1h-2zM10 10h1v1h-1zM1 11h10v1h-10zM1 12h1v1h-1zM4 12h2v1h-2zM10 12h1v1h-1zM1 13h10v1h-10z"/><path fill="#0000ff" d="M2 6h2v1h-2zM6 6h4v1h-4zM2 8h2v1h-2zM6 8h4v1h-4zM2 10h2v1h-2zM6 10h4v1h-4zM2 12h2v1h-2zM6 12h4v1h-4z"/></svg><svg class="a" style="left:249px;top:123px" width="7" height="4" shape-rendering="crispEdges"><path fill="#1a1a1a" d="M0 0h7v1h-7zM1 1h5v1h-5zM2 2h3v1h-3zM3 3h1v1h-1z"/></svg><svg class="a" style="left:287px;top:123px" width="7" height="4" shape-rendering="crispEdges"><path fill="#1a1a1a" d="M0 0h7v1h-7zM1 1h5v1h-5zM2 2h3v1h-3zM3 3h1v1h-1z"/></svg><svg class="a" style="left:325px;top:123px" width="7" height="4" shape-rendering="crispEdges"><path fill="#1a1a1a" d="M0 0h7v1h-7zM1 1h5v1h-5zM2 2h3v1h-3zM3 3h1v1h-1z"/></svg><svg class="a" style="left:369px;top:123px" width="7" height="4" shape-rendering="crispEdges"><path fill="#1a1a1a" d="M0 0h7v1h-7zM1 1h5v1h-5zM2 2h3v1h-3zM3 3h1v1h-1z"/></svg><svg class="a" style="left:453px;top:123px" width="7" height="4" shape-rendering="crispEdges"><path fill="#1a1a1a" d="M0 0h7v1h-7zM1 1h5v1h-5zM2 2h3v1h-3zM3 3h1v1h-1z"/></svg>
 <!-- grid -->
 <div id="grid" class="a">
  <div id="ghead" class="a"></div>
  <div class="a hs" style="left:20px;"></div>
  <div class="a hs" style="left:40px;"></div>
  <div class="a hs" style="left:60px;"></div>
  <div class="a hs" style="left:215px;"></div>
  <div class="a hs" style="left:392px;"></div>
  <div class="a hs" style="left:512px;"></div>
  <div class="a hs" style="left:630px;"></div>
  <div class="a hs" style="left:979px;"></div>
  <div class="h" style="left:7px;">s</div>
  <div class="h" style="left:26px;">D</div>
  <div class="h" style="left:47px;">P</div>
  <div class="h" style="left:62px;letter-spacing:-0.2px;">Doklad</div>
  <div class="h" style="left:217px;letter-spacing:0.28px;">Dopravce</div>
  <div class="h" style="left:393px;width:118px;text-align:right;">Odesláno</div>
  <div class="h" style="left:513px;width:117px;text-align:right;">Dodáno</div>
  <div class="h" style="left:632px;letter-spacing:-0.4px;">Popis</div>
  <div id="sel" class="a"></div>
  <div class="a vl" style="left:20px;"></div>
  <div class="a vl" style="left:40px;"></div>
  <div class="a vl" style="left:60px;"></div>
  <div class="a vl" style="left:215px;"></div>
  <div class="a vl" style="left:392px;"></div>
  <div class="a vl" style="left:512px;"></div>
  <div class="a vl" style="left:630px;"></div>
  <div class="a vl" style="left:979px;"></div>
  <div id="focus" class="a"></div>
  <svg class="a" style="left:45px;top:23px" width="12" height="12" viewBox="0 0 12 12"><rect x="1" y="5" width="8" height="6" rx="0.6" fill="#3bc27a"/><path d="M2.9,5.4 V3.6 a2.3,2.3 0 0 1 4.6,0 V5.4" fill="none" stroke="#3bc27a" stroke-width="1.3"/></svg>
  <div class="r" style="left:63px;top:24px;">OV/2011/1</div>
  <div class="r" style="left:63px;top:40px;">OV/2011/2</div>
  <div class="r" style="left:63px;top:56px;">OV/2018/1</div>
  <div class="r sq" style="left:217px;top:24px;transform:scaleX(.84);">PPL</div>
  <div class="r sq" style="left:217px;top:40px;transform:scaleX(.84);">PPL</div>
  <div class="r sq" style="left:217px;top:56px;transform:scaleX(.875);">GEIS</div>
  <div class="r" style="left:393px;width:115px;text-align:right;top:24px;">0000-00-00 00:00:00</div>
  <div class="r" style="left:393px;width:115px;text-align:right;top:40px;">0000-00-00 00:00:00</div>
  <div class="r" style="left:393px;width:115px;text-align:right;top:56px;">2018-04-25 00:00:00</div>
  <div class="r" style="left:513px;width:114px;text-align:right;top:24px;">0000-00-00 00:00:00</div>
  <div class="r" style="left:513px;width:114px;text-align:right;top:40px;">0000-00-00 00:00:00</div>
  <div class="r" style="left:513px;width:114px;text-align:right;top:56px;">2018-04-25 00:00:00</div>
  <div id="sb" class="a">
   <div id="thumb" class="a"></div>
  </div>
  <svg class="a" style="left:986px;top:8px" width="7" height="4" shape-rendering="crispEdges"><path fill="#3c3c3c" d="M3 0h1v1h-1zM2 1h3v1h-3zM1 2h5v1h-5zM0 3h7v1h-7z"/></svg>
  <svg class="a" style="left:986px;top:518px" width="7" height="4" shape-rendering="crispEdges"><path fill="#3c3c3c" d="M0 0h7v1h-7zM1 1h5v1h-5zM2 2h3v1h-3zM3 3h1v1h-1z"/></svg>
 </div>
 <div id="gstat" class="a">
  <div class="a" style="left:38px;top:0;width:1px;height:18px;background:#c9c9c9;"></div>
  <div class="a" style="left:39px;top:0;width:1px;height:18px;background:#fbfbfb;"></div>
 </div>

 <!-- separators + fn-key bar (abs y 722..740) -->
 <div class="a" style="left:0;top:691px;width:1007px;height:1px;background:#fff;"></div>
 <div class="a" style="left:0;top:692px;width:1008px;height:1px;background:#9d9d9d;"></div>
 <div class="a" style="left:0;top:693px;width:1007px;height:1px;background:#fff;"></div>
 <div class="a bb" style="top:694px;height:17px;">
  <div class="t" style="left:3px;top:3px;">1-</div>
  <div class="t" style="left:105px;top:3px;">2-</div>
  <div class="t" style="left:206px;top:3px;">3-</div>
  <div class="t" style="left:307px;top:3px;">4-</div>
  <div class="t" style="left:408px;top:3px;">5-</div>
  <div class="t" style="left:509px;top:3px;">6-Nový</div>
  <div class="t" style="left:610px;top:3px;">7-</div>
  <div class="t" style="left:711px;top:3px;">8-</div>
  <div class="t" style="left:812px;top:3px;">9-</div>
  <div class="t" style="left:913px;top:3px;">10-</div>
  <div class="a fs" style="left:101px;"></div>
  <div class="a fs" style="left:202px;"></div>
  <div class="a fs" style="left:302px;"></div>
  <div class="a fs" style="left:403px;"></div>
  <div class="a fs" style="left:504px;"></div>
  <div class="a fs" style="left:605px;"></div>
  <div class="a fs" style="left:706px;"></div>
  <div class="a fs" style="left:806px;"></div>
  <div class="a fs" style="left:907px;"></div>
 </div>
 <div class="a" style="left:0;top:711px;width:1008px;height:1px;background:#9d9d9d;"></div>
 <div class="a" style="left:0;top:712px;width:1007px;height:1px;background:#fff;"></div>
 <div class="a bb" style="top:713px;height:17px;">
  <div class="t sq" style="left:2px;top:3px;transform:scaleX(.9);">Kniha</div>
  <div class="t" style="left:107px;top:3px;letter-spacing:-0.3px;">2018</div>
  <div class="t sq" style="left:147px;top:3px;color:#a0a0a0;transform:scaleX(.84);">PŘES</div>
  <div class="t sq" style="left:352px;top:3px;transform:scaleX(.88);">DEMO</div>
  <div class="t sq" style="left:480.5px;top:3px;transform:scaleX(.905);">implicitní</div>
  <div class="a fs" style="left:60px;"></div>
  <div class="a fs" style="left:102px;"></div>
  <div class="a fs" style="left:142px;"></div>
  <div class="a fs" style="left:183px;"></div>
  <div class="a fs" style="left:223px;"></div>
  <div class="a fs" style="left:307px;"></div>
  <div class="a fs" style="left:348px;"></div>
  <div class="a fs" style="left:430px;"></div>
  <div class="a fs" style="left:477px;"></div>
  <div class="a fs" style="left:568px;"></div>
  <svg class="a" style="left:998px;top:7px" width="8" height="8" shape-rendering="crispEdges"><path fill="#ffffff" d="M6 0h1v1h-1zM3 3h1v1h-1zM6 3h1v1h-1zM0 6h1v1h-1zM3 6h1v1h-1zM6 6h1v1h-1z"/><path fill="#dcd9d5" d="M7 0h1v1h-1zM6 1h1v1h-1zM4 3h1v1h-1zM7 3h1v1h-1zM3 4h1v1h-1zM6 4h1v1h-1zM1 6h1v1h-1zM4 6h1v1h-1zM7 6h1v1h-1zM0 7h1v1h-1zM3 7h1v1h-1zM6 7h1v1h-1z"/><path fill="#aaa6a0" d="M7 1h1v1h-1zM4 4h1v1h-1zM7 4h1v1h-1zM1 7h1v1h-1zM4 7h1v1h-1zM7 7h1v1h-1z"/></svg>
 </div>
</div>
</body>
</html>
